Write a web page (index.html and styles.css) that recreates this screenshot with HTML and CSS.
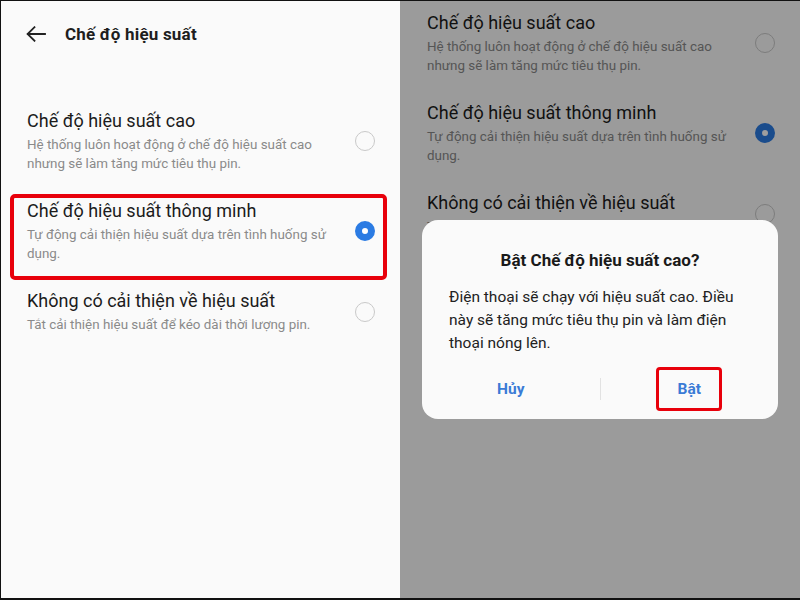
FILE: index.html
```html
<!DOCTYPE html>
<html lang="vi">
<head>
<meta charset="utf-8">
<title>Chế độ hiệu suất</title>
<link rel="stylesheet" href="styles.css">
</head>
<body>
<div class="frame">
  <section class="pane pane-left">
    <header class="topbar">
      <svg class="back" width="20" height="16" viewBox="0 0 20 16" aria-hidden="true">
        <path d="M19 8H1.8M8.5 1.2L1.6 8l6.9 6.8" fill="none" stroke="#222" stroke-width="1.8" stroke-linecap="square"/>
      </svg>
      <h1 class="title">Chế độ hiệu suất</h1>
    </header>
    <div class="list">
      <div class="item">
        <div class="row">
          <div class="text">
            <div class="item-title">Chế độ hiệu suất cao</div>
            <div class="item-desc">Hệ thống luôn hoạt động ở chế độ hiệu suất cao nhưng sẽ làm tăng mức tiêu thụ pin.</div>
          </div>
          <span class="radio"></span>
        </div>
      </div>
      <div class="item">
        <div class="row">
          <div class="text">
            <div class="item-title">Chế độ hiệu suất thông minh</div>
            <div class="item-desc">Tự động cải thiện hiệu suất dựa trên tình huống sử dụng.</div>
          </div>
          <span class="radio on"></span>
        </div>
        <span class="mark"></span>
      </div>
      <div class="item">
        <div class="row">
          <div class="text">
            <div class="item-title">Không có cải thiện về hiệu suất</div>
            <div class="item-desc">Tắt cải thiện hiệu suất để kéo dài thời lượng pin.</div>
          </div>
          <span class="radio"></span>
        </div>
      </div>
    </div>
  </section>

  <section class="pane pane-right">
    <div class="list list-scrolled">
      <div class="item">
        <div class="row">
          <div class="text">
            <div class="item-title">Chế độ hiệu suất cao</div>
            <div class="item-desc">Hệ thống luôn hoạt động ở chế độ hiệu suất cao nhưng sẽ làm tăng mức tiêu thụ pin.</div>
          </div>
          <span class="radio"></span>
        </div>
      </div>
      <div class="item">
        <div class="row">
          <div class="text">
            <div class="item-title">Chế độ hiệu suất thông minh</div>
            <div class="item-desc">Tự động cải thiện hiệu suất dựa trên tình huống sử dụng.</div>
          </div>
          <span class="radio on"></span>
        </div>
      </div>
      <div class="item">
        <div class="row">
          <div class="text">
            <div class="item-title">Không có cải thiện về hiệu suất</div>
            <div class="item-desc">Tắt cải thiện hiệu suất để kéo dài thời lượng pin.</div>
          </div>
          <span class="radio"></span>
        </div>
      </div>
    </div>
    <div class="scrim">
      <div class="dialog">
        <h2 class="dialog-title">Bật Chế độ hiệu suất cao?</h2>
        <p class="dialog-body">Điện thoại sẽ chạy với hiệu suất cao. Điều này sẽ tăng mức tiêu thụ pin và làm điện thoại nóng lên.</p>
        <div class="actions">
          <button class="btn">Hủy</button>
          <span class="divider"></span>
          <button class="btn">Bật<span class="btn-mark"></span></button>
        </div>
      </div>
    </div>
  </section>
</div>
</body>
</html>
```

FILE: styles.css
```css
* { box-sizing: border-box; }
html, body { margin: 0; padding: 0; }
body {
  width: 800px;
  height: 600px;
  overflow: hidden;
  font-family: Roboto, "Noto Sans", "Liberation Sans", sans-serif;
  background: #fafafa;
}
.frame {
  width: 800px;
  height: 600px;
  border-top: 1px solid #111;
  border-left: 1px solid #111;
  border-bottom: 2px solid #111;
  display: grid;
  grid-template-columns: 399px 400px;
  overflow: hidden;
}
.pane {
  position: relative;
  background: #fafafa;
  overflow: hidden;
}
.topbar {
  height: 65px;
  display: flex;
  align-items: center;
  padding-left: 25px;
  gap: 19px;
}
.back { display: block; }
.title {
  margin: 0;
  font-size: 17px;
  font-weight: 700;
  color: #1e1e1e;
  letter-spacing: 0.2px;
}
.list { padding-top: 30px; }
.list-scrolled { padding-top: 0; margin-top: -3px; }
.pane-right .list { padding-left: 1px; }
.item {
  position: relative;
  height: 90px;
  padding: 13px 25px 0 26px;
}
.row {
  display: flex;
  align-items: center;
}
.text { flex: 1; padding-right: 18px; }
.item-title {
  font-size: 18px;
  line-height: 24px;
  height: 24px;
  color: #1c1c1c;
  margin-bottom: 3px;
}
.item-desc {
  font-size: 13.4px;
  line-height: 18.5px;
  color: #8a8a8a;
}
.radio {
  flex: none;
  width: 20px;
  height: 20px;
  border-radius: 50%;
  border: 1.5px solid #c9c9c9;
}
.radio.on {
  border: 7px solid #2b7be3;
  background: #fff;
}
.mark {
  position: absolute;
  left: 9px;
  right: 13px;
  top: 8px;
  bottom: -4px;
  border: 4px solid #e8000b;
  border-radius: 5px;
  pointer-events: none;
}
.scrim {
  position: absolute;
  inset: 0;
  background: rgba(0, 0, 0, 0.38);
}
.dialog {
  position: absolute;
  left: 22px;
  top: 219px;
  width: 356px;
  background: #fafafa;
  border-radius: 16px;
  padding: 28px 0 8px;
}
.dialog-title {
  margin: 0;
  text-align: center;
  font-size: 17px;
  line-height: 24px;
  font-weight: 700;
  color: #1a1a1a;
}
.dialog-body {
  margin: 14px 0 0;
  padding: 0 27px;
  font-size: 15.5px;
  line-height: 23px;
  color: #222;
}
.actions {
  margin-top: 12px;
  height: 44px;
  display: flex;
  align-items: center;
}
.btn {
  position: relative;
  flex: 1;
  height: 44px;
  border: 0;
  background: transparent;
  font-family: inherit;
  font-size: 15.5px;
  font-weight: 700;
  color: #3a7bd6;
  padding: 0;
}
.divider {
  width: 1px;
  height: 22px;
  background: #e2e2e2;
}
.btn-mark {
  position: absolute;
  left: 50%;
  top: 0;
  width: 66px;
  height: 44px;
  margin-left: -33px;
  border: 3px solid #e8000b;
  border-radius: 4px;
}
```
